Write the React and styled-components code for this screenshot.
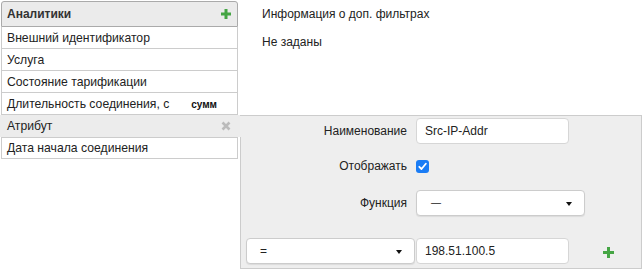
import React from 'react';
import styled, { createGlobalStyle } from 'styled-components';

const Global = createGlobalStyle`
  html, body { margin: 0; padding: 0; background: #fff; }
  body {
    font-family: "Liberation Sans", Arial, Helvetica, sans-serif;
    font-size: 12px;
    color: #333;
  }
  * { box-sizing: border-box; }
`;

const Page = styled.div`
  display: flex;
  align-items: flex-start;
  width: 643px;
  height: 270px;
  overflow: hidden;
`;

const Sidebar = styled.div`
  flex: none;
  display: flex;
  flex-direction: column;
  width: 237px;
  margin: 1px 0 0 1px;
`;

const Header = styled.div`
  display: flex;
  align-items: center;
  justify-content: space-between;
  height: 26px;
  padding: 0 6px 0 5px;
  border: 1px solid #aaa;
  border-radius: 3px 3px 0 0;
  background: #ebebeb;
  font-weight: bold;
  color: #333;
`;

const Row = styled.div`
  display: flex;
  align-items: center;
  height: 22px;
  padding: 0 6px 0 5px;
  border: 1px solid #ccc;
  border-top: ${p => (p.$topBorder ? '1px solid #ccc' : 'none')};
  color: #222;
  font-size: 12.2px;
  white-space: nowrap;
`;

const ActiveRow = styled.div`
  display: flex;
  align-items: center;
  justify-content: space-between;
  height: 22px;
  margin: 0 -2px 0 -1px;
  padding: 0 9px 0 7px;
  background: #ececec;
  color: #222;
  font-size: 12.2px;
`;

const Badge = styled.span`
  margin: 2px 14px 0 auto;
  font-size: 10px;
  font-weight: bold;
  color: #111;
`;

const Main = styled.div`
  flex: 1;
  display: flex;
  flex-direction: column;
  margin-left: 2px;
`;

const Info = styled.div`
  display: flex;
  flex-direction: column;
  gap: 13px;
  height: 115px;
  padding: 7px 0 0 22px;
  line-height: 15px;
  color: #222;
`;

const Panel = styled.div`
  position: relative;
  width: 402px;
  height: 154px;
  background: #eeeeee;
  border: 1px solid #ccc;
  border-left: none;
  padding-top: 1px;
  &::before {
    content: '';
    position: absolute;
    left: 0;
    top: 21px;
    bottom: -1px;
    width: 1px;
    background: #ccc;
  }
`;

const FieldRow = styled.div`
  display: flex;
  align-items: center;
  height: 26px;
  margin-top: ${p => p.$top || 0}px;
  padding-left: ${p => p.$indent || 0}px;
`;

const Label = styled.div`
  width: 167px;
  margin-right: 9px;
  text-align: right;
  color: #222;
`;

const TextInput = styled.div`
  display: flex;
  align-items: center;
  width: 153px;
  height: 26px;
  padding: 0 8px;
  background: #fff;
  border: 1px solid #d6d6d6;
  border-radius: 4px;
  color: #222;
  font-size: 12px;
`;

const Select = styled.div`
  display: flex;
  align-items: center;
  justify-content: space-between;
  width: 169px;
  height: 26px;
  padding: 0 12px 0 ${p => p.$pad || 13}px;
  margin-right: ${p => p.$gap || 0}px;
  background: #fff;
  border: 1px solid #ccc;
  border-radius: 4px;
  box-shadow: 0 1px 1px rgba(0, 0, 0, 0.08);
  color: #222;
`;

const DashText = styled.span`
  font-size: 10px;
  line-height: 10px;
  margin-top: -1px;
`;

const Caret = styled.span`
  width: 0;
  height: 0;
  margin-top: 1px;
  border-left: 3.5px solid transparent;
  border-right: 3.5px solid transparent;
  border-top: 4px solid #111;
`;

const Check = styled.span`
  display: inline-flex;
  align-items: center;
  justify-content: center;
  width: 13px;
  height: 13px;
  border-radius: 3px;
  background: #1a7cf5;
`;

const IconSlot = styled.span`
  display: inline-flex;
  margin-left: ${p => p.$left || 0}px;
  margin-top: ${p => p.$top || 0}px;
`;

const Plus = ({ size = 10, thick = 3 }) => {
  const o = (size - thick) / 2;
  return (
    <svg width={size} height={size} viewBox={`0 0 ${size} ${size}`}>
      <rect x={o} y="0" width={thick} height={size} fill="#45a544" />
      <rect x="0" y={o} width={size} height={thick} fill="#45a544" />
    </svg>
  );
};

const Cross = () => (
  <svg width="10" height="10" viewBox="0 0 10 10">
    <path d="M1.5 1.5 L8.5 8.5 M8.5 1.5 L1.5 8.5" stroke="#bbb" strokeWidth="2.6" strokeLinecap="butt" />
  </svg>
);

const Tick = () => (
  <svg width="9" height="9" viewBox="0 0 9 9">
    <path d="M1.3 4.8 L3.5 7 L7.8 1.8" stroke="#fff" strokeWidth="1.8" fill="none" strokeLinecap="round" strokeLinejoin="round" />
  </svg>
);

const items = [
  { name: 'Внешний идентификатор' },
  { name: 'Услуга' },
  { name: 'Состояние тарификации' },
  { name: 'Длительность соединения, с', badge: 'сумм' },
];

export default function App() {
  return (
    <>
      <Global />
      <Page>
        <Sidebar>
          <Header>
            <span>Аналитики</span>
            <Plus size={10} thick={3} />
          </Header>
          {items.map(it => (
            <Row key={it.name}>
              <span>{it.name}</span>
              {it.badge && <Badge>{it.badge}</Badge>}
            </Row>
          ))}
          <ActiveRow>
            <span>Атрибут</span>
            <Cross />
          </ActiveRow>
          <Row $topBorder>
            <span>Дата начала соединения</span>
          </Row>
        </Sidebar>
        <Main>
          <Info>
            <div>Информация о доп. фильтрах</div>
            <div>Не заданы</div>
          </Info>
          <Panel>
            <FieldRow $top={1}>
              <Label>Наименование</Label>
              <TextInput>Src-IP-Addr</TextInput>
            </FieldRow>
            <FieldRow $top={9}>
              <Label>Отображать</Label>
              <Check><Tick /></Check>
            </FieldRow>
            <FieldRow $top={11}>
              <Label>Функция</Label>
              <Select $pad={14}>
                <DashText>—</DashText>
                <Caret />
              </Select>
            </FieldRow>
            <FieldRow $top={22} $indent={6}>
              <Select $gap={1}>
                <span>=</span>
                <Caret />
              </Select>
              <TextInput>198.51.100.5</TextInput>
              <IconSlot $left={34} $top={2}>
                <Plus size={11} thick={3} />
              </IconSlot>
            </FieldRow>
          </Panel>
        </Main>
      </Page>
    </>
  );
}
